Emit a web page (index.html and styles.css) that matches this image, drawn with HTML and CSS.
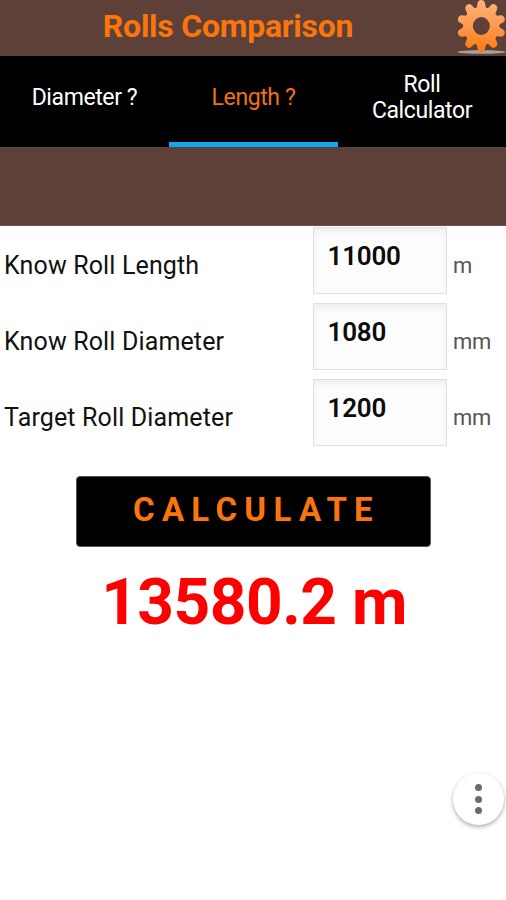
FILE: index.html
```html
<!DOCTYPE html>
<html lang="en">
<head>
<meta charset="utf-8">
<title>Rolls Comparison</title>
<link rel="stylesheet" href="styles.css">
</head>
<body>
<header class="header">
  <h1 class="title"><span>Rolls Comparison</span></h1>
  <svg class="gear" viewBox="0 0 50 56" aria-label="Settings">
    <defs>
      <linearGradient id="fill" gradientUnits="userSpaceOnUse" x1="0" y1="0" x2="0" y2="52">
        <stop offset="0" stop-color="#ffb27a"/>
        <stop offset=".5" stop-color="#ff9a50"/>
        <stop offset="1" stop-color="#ff7a0c"/>
      </linearGradient>
      <mask id="shape">
        <g transform="translate(25.3 26) scale(.94 1)" fill="#fff">
          <circle r="19"/>
          <g id="teeth">
            <path id="tooth" d="M-6.5-17Q-4-19-4-22.5Q-3.5-26 0-26T4-22.5Q4-19 6.5-17Z"/>
            <use href="#tooth" transform="rotate(36)"/>
            <use href="#tooth" transform="rotate(72)"/>
            <use href="#tooth" transform="rotate(108)"/>
            <use href="#tooth" transform="rotate(144)"/>
          </g>
          <use href="#teeth" transform="rotate(180)"/>
          <circle r="9" fill="#000"/>
        </g>
      </mask>
    </defs>
    <ellipse cx="25.5" cy="52" rx="24" ry="1.8" fill="#aaa09c"/>
    <rect width="50" height="56" fill="url(#fill)" mask="url(#shape)"/>
  </svg>
</header>
<nav class="tabs">
  <a class="tab"><span>Diameter ?</span></a>
  <a class="tab active"><span>Length ?</span></a>
  <a class="tab"><span>Roll<br>Calculator</span></a>
</nav>
<div class="band"></div>
<main class="content">
  <div class="row"><label>Know Roll Length</label><div class="field">11000</div><span class="unit">m</span></div>
  <div class="row"><label>Know Roll Diameter</label><div class="field">1080</div><span class="unit">mm</span></div>
  <div class="row"><label>Target Roll Diameter</label><div class="field">1200</div><span class="unit">mm</span></div>
  <button class="calculate"><span>CALCULATE</span></button>
  <div class="result"><span>13580.2 m</span></div>
</main>
<button class="more" aria-label="More"><i></i><i></i><i></i></button>
</body>
</html>
```

FILE: styles.css
```css
* { box-sizing: border-box; }
body {
  margin: 0;
  height: 900px;
  background: #fff;
  font-family: Roboto, "Liberation Sans", sans-serif;
  overflow: hidden;
}
.header {
  position: relative;
  height: 56px;
  background: #5d4037;
  text-align: center;
}
.title {
  margin: 0;
  padding-right: 50px;
  font-size: 32px;
  line-height: 53px;
  font-weight: 700;
  letter-spacing: -.25px;
  color: #fb750d;
}
.gear {
  position: absolute;
  top: 0;
  right: 0;
  width: 50px;
  height: 56px;
}
.tabs {
  display: grid;
  grid-template-columns: 169px 169px 168px;
  height: 91px;
  background: #000;
}
.tab {
  display: flex;
  align-items: center;
  justify-content: center;
  padding-bottom: 3px;
  border-bottom: 5px solid transparent;
  color: #fff;
  font-size: 23px;
  line-height: 26px;
  letter-spacing: -.4px;
  text-align: center;
}
.tab.active {
  color: #f0720f;
  border-color: #12a5f4;
}
.band {
  height: 79px;
  background: #5d4037;
  border-bottom: 1px solid #6b5048;
}
.content {
  display: flex;
  flex-direction: column;
}
.row {
  display: grid;
  grid-template-columns: 309px 134px 1fr;
  height: 76px;
  padding: 1px 0 0 4px;
  align-items: start;
}
.row label {
  line-height: 78px;
  font-size: 25px;
  font-weight: 370;
  letter-spacing: .14px;
  color: #111;
  white-space: nowrap;
}
.field {
  height: 67px;
  padding: 0 13.5px;
  border: 1.5px solid #dfdfdf;
  background: #fdfdfd;
  box-shadow: inset 0 4px 6px #eee;
  font-size: 26px;
  font-weight: 600;
  letter-spacing: -.2px;
  line-height: 56px;
  color: #0c0c0c;
}
.unit {
  padding-left: 6px;
  line-height: 78px;
  font-size: 22px;
  font-weight: 400;
  letter-spacing: -.2px;
  color: #555;
}
.calculate {
  align-self: center;
  width: 355px;
  height: 71px;
  margin: 22px 0 0;
  padding: 0 0 4px 7px;
  border: 1px solid #555;
  border-radius: 4px;
  background: #000;
  color: #fb750d;
  font: 700 33px/60px Roboto, sans-serif;
  letter-spacing: 7.3px;
}
.result {
  margin-top: 19px;
  padding-left: 2px;
  color: #f00;
  text-align: center;
  font-size: 64px;
  font-weight: 700;
  letter-spacing: -.5px;
  line-height: 74px;
}
.more {
  position: absolute;
  left: 453px;
  top: 773px;
  display: flex;
  flex-direction: column;
  align-items: center;
  justify-content: center;
  gap: 4.5px;
  width: 51px;
  height: 52px;
  padding: 0;
  border: 0;
  border-radius: 50%;
  background: #fff;
  box-shadow: 0 2px 4px rgba(0, 0, 0, .32);
}
.more i {
  width: 7px;
  height: 7px;
  border-radius: 50%;
  background: #6b6b6b;
}
```
